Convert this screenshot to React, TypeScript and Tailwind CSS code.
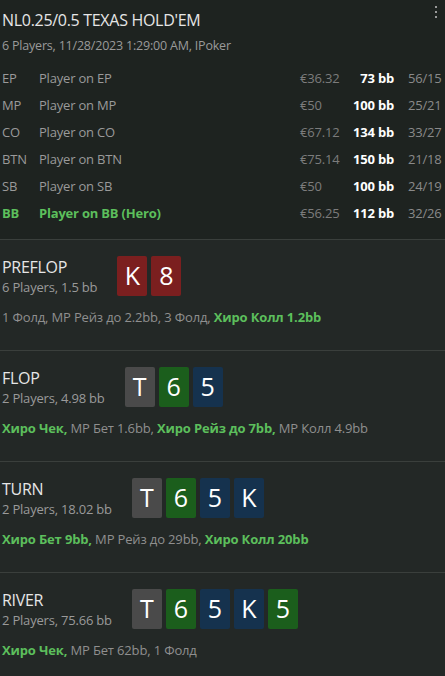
import React from 'react';

type Card = { rank: string; color: 'red' | 'gray' | 'green' | 'blue' };

const cardBg: Record<Card['color'], string> = {
  red: 'bg-[#7b1f1f]',
  gray: 'bg-[#4a4a4a]',
  green: 'bg-[#1b5e1c]',
  blue: 'bg-[#15324e]',
};

const players = [
  { pos: 'EP', name: 'Player on EP', money: '€36.32', bb: '73 bb', stats: '56/15' },
  { pos: 'MP', name: 'Player on MP', money: '€50', bb: '100 bb', stats: '25/21' },
  { pos: 'CO', name: 'Player on CO', money: '€67.12', bb: '134 bb', stats: '33/27' },
  { pos: 'BTN', name: 'Player on BTN', money: '€75.14', bb: '150 bb', stats: '21/18' },
  { pos: 'SB', name: 'Player on SB', money: '€50', bb: '100 bb', stats: '24/19' },
  { pos: 'BB', name: 'Player on BB (Hero)', money: '€56.25', bb: '112 bb', stats: '32/26', hero: true },
];

type Action = { text: string; hero?: boolean };

const streets: { name: string; info: string; cards: Card[]; actions: Action[] }[] = [
  {
    name: 'PREFLOP',
    info: '6 Players, 1.5 bb',
    cards: [
      { rank: 'K', color: 'red' },
      { rank: '8', color: 'red' },
    ],
    actions: [
      { text: '1 Фолд, MP Рейз до 2.2bb, 3 Фолд, ' },
      { text: 'Хиро Колл 1.2bb', hero: true },
    ],
  },
  {
    name: 'FLOP',
    info: '2 Players, 4.98 bb',
    cards: [
      { rank: 'T', color: 'gray' },
      { rank: '6', color: 'green' },
      { rank: '5', color: 'blue' },
    ],
    actions: [
      { text: 'Хиро Чек, ', hero: true },
      { text: 'MP Бет 1.6bb, ' },
      { text: 'Хиро Рейз до 7bb, ', hero: true },
      { text: 'MP Колл 4.9bb' },
    ],
  },
  {
    name: 'TURN',
    info: '2 Players, 18.02 bb',
    cards: [
      { rank: 'T', color: 'gray' },
      { rank: '6', color: 'green' },
      { rank: '5', color: 'blue' },
      { rank: 'K', color: 'blue' },
    ],
    actions: [
      { text: 'Хиро Бет 9bb, ', hero: true },
      { text: 'MP Рейз до 29bb, ' },
      { text: 'Хиро Колл 20bb', hero: true },
    ],
  },
  {
    name: 'RIVER',
    info: '2 Players, 75.66 bb',
    cards: [
      { rank: 'T', color: 'gray' },
      { rank: '6', color: 'green' },
      { rank: '5', color: 'blue' },
      { rank: 'K', color: 'blue' },
      { rank: '5', color: 'green' },
    ],
    actions: [
      { text: 'Хиро Чек, ', hero: true },
      { text: 'MP Бет 62bb, 1 Фолд' },
    ],
  },
];

const App: React.FC = () => {
  return (
    <div className="w-[445px] h-[676px] overflow-hidden bg-[#232826] font-['Open_Sans',sans-serif] text-[#e6e6e6]">
      <div className="relative bg-[#1e2320] px-[2px] pt-[8px] pb-[12px] border-b border-[#3a3f3c]">
        <div className="text-[16px] leading-[24px] tracking-[-0.3px]">NL0.25/0.5 TEXAS HOLD'EM</div>
        <div className="mt-[4px] text-[12.5px] leading-[20px] text-[#9a9a9a] tracking-[-0.2px]">
          6 Players, 11/28/2023 1:29:00 AM, IPoker
        </div>
        <div className="absolute right-[8px] top-[6px] flex flex-col gap-[3px]">
          <span className="block w-[2px] h-[2px] bg-[#9a9a9a]" />
          <span className="block w-[2px] h-[2px] bg-[#9a9a9a]" />
          <span className="block w-[2px] h-[2px] bg-[#9a9a9a]" />
        </div>
        <div className="mt-[9px] flex flex-col text-[13px] tracking-[-0.2px]">
          {players.map((p) => (
            <div key={p.pos} className="flex items-center h-[27px]">
              <div className={`w-[37px] ${p.hero ? 'text-[#5cbf5c] font-bold' : 'text-[#9a9a9a]'}`}>{p.pos}</div>
              <div className={`flex-1 ${p.hero ? 'text-[#5cbf5c] font-bold' : 'text-[#9a9a9a]'}`}>{p.name}</div>
              <div className="w-[50px] text-[#7c7c7c]">{p.money}</div>
              <div className="w-[44px] text-right font-bold text-white">{p.bb}</div>
              <div className="w-[35px] ml-[14px] text-[#8a8a8a]">{p.stats}</div>
            </div>
          ))}
        </div>
      </div>
      {streets.map((s) => (
        <div key={s.name} className="px-[2px] pt-[16px] h-[111px] border-b border-[#3a3f3c]">
          <div className="flex items-center gap-[20px]">
            <div className="flex flex-col">
              <div className="text-[16px] leading-[22px] tracking-[-0.3px]">{s.name}</div>
              <div className="text-[13px] leading-[18px] text-[#9a9a9a] tracking-[-0.2px]">{s.info}</div>
            </div>
            <div className="flex gap-[4px]">
              {s.cards.map((c, i) => (
                <div
                  key={i}
                  className={`w-[30px] h-[40px] rounded-[2px] flex items-center justify-center text-[25px] text-white ${cardBg[c.color]}`}
                >
                  {c.rank}
                </div>
              ))}
            </div>
          </div>
          <div className="mt-[10px] text-[13px] leading-[22px] tracking-[-0.15px] text-[#8f8f8f]">
            {s.actions.map((a, i) => (
              <span key={i} className={a.hero ? 'text-[#5cbf5c] font-bold' : ''}>
                {a.text}
              </span>
            ))}
          </div>
        </div>
      ))}
    </div>
  );
};

export default App;
